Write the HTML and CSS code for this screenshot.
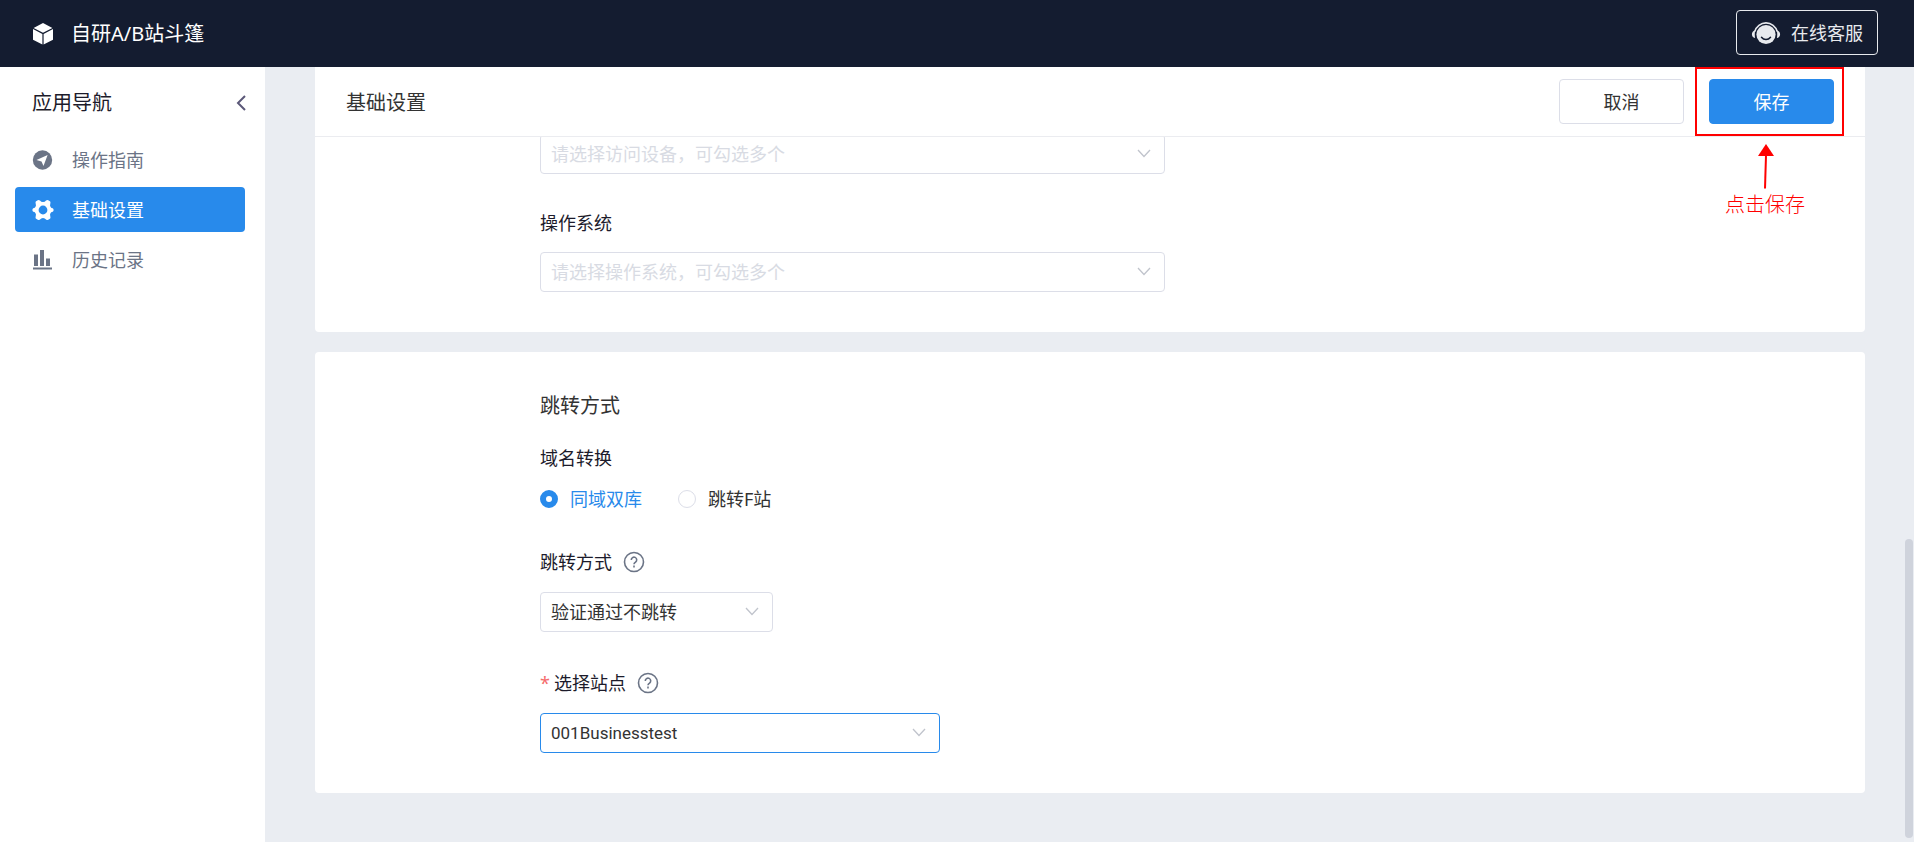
FILE: index.html
```html
<!DOCTYPE html>
<html lang="zh-CN">
<head>
<meta charset="utf-8">
<meta name="viewport" content="width=device-width, initial-scale=1">
<title>自研A/B站斗篷</title>
<link rel="stylesheet" href="styles.css">
</head>
<body>
<header class="topbar">
  <div class="brand">
    <svg class="brand-icon" width="22" height="22" viewBox="0 0 22 22" aria-hidden="true">
      <path fill="#fff" d="M11 0 20.400 4.900 11 9.800 1.600 4.900ZM1 6 10.400 10.900V21.500L1 16.800ZM21 6 11.600 10.900V21.500L21 16.800Z"/>
    </svg>
    <span>自研A/B站斗篷</span>
  </div>
  <button type="button" class="support">
    <svg width="30" height="26" viewBox="0 0 30 26" aria-hidden="true">
      <circle cx="15" cy="14.500" r="9.600" fill="#e8eaee"/>
      <path d="M3.800 11.500a11.600 11.600 0 0 1 22.400 0" fill="none" stroke="#e8eaee" stroke-width="1.600"/>
      <path d="M4.400 10.200C2 10.800.900 12.400.900 14.200s1 3.400 3.200 3.900c-.500-2.800-.500-5.400.300-7.900ZM25.600 10.200c2.400.600 3.500 2.200 3.500 4s-1 3.400-3.200 3.900c.500-2.800.500-5.400-.300-7.900Z" fill="#e8eaee"/>
      <path d="M10.500 17.300c2.300 3 6.700 3 9 0" fill="none" stroke="#141c30" stroke-width="1.500" stroke-linecap="round"/>
    </svg>
    <span>在线客服</span>
  </button>
</header>

<div class="layout">
  <aside class="sidebar">
    <div class="sidebar-head">
      <span>应用导航</span>
      <button type="button" class="collapse" aria-label="收起">
        <svg width="10" height="16" viewBox="0 0 10 16"><path d="M9 1 2 8l7 7" fill="none" stroke="#5b5878" stroke-width="2"/></svg>
      </button>
    </div>
    <nav class="nav">
      <a class="nav-item" href="#guide">
        <svg width="22" height="22" viewBox="0 0 22 22" aria-hidden="true"><circle cx="10.500" cy="11" r="9.700" fill="#6b7486"/><path d="M15.600 6 4.500 11l5 1.500L11.500 17Z" fill="#fff"/></svg>
        <span>操作指南</span>
      </a>
      <a class="nav-item active" href="#settings">
        <svg width="22" height="22" viewBox="0 0 22 22" aria-hidden="true">
          <path fill="#fff" fill-rule="evenodd" d="M5.300 1.400Q6.500.500 8 1.500Q9 3 11 3T14 1.500Q15.500.500 16.700 1.400L18.200 2.500Q18.700 3 18.300 4.700Q17.600 6.500 18.600 8T20.800 9.300Q21.600 9.800 21.600 11T20.800 12.700Q19.600 12.800 18.600 14T18.300 17.300Q18.700 19 18.200 19.500L16.700 20.600Q15.500 21.500 14 20.500Q13 19 11 19T8 20.500Q6.500 21.500 5.300 20.600L3.800 19.500Q3.300 19 3.700 17.300Q4.400 15.500 3.400 14T1.200 12.700Q.400 12.200 .400 11T1.200 9.300Q2.400 9.200 3.400 8T3.700 4.700Q3.300 3 3.800 2.500ZM11 6.600a4.400 4.400 0 1 0 0 8.800a4.400 4.400 0 1 0 0-8.800Z"/>
        </svg>
        <span>基础设置</span>
      </a>
      <a class="nav-item" href="#history">
        <svg width="22" height="22" viewBox="0 0 22 22" aria-hidden="true"><path fill="#6b7486" d="M2 5.500H6V17H2ZM8 1H12V17H8ZM14 9.500H18V17H14ZM1 18.500h19v2H1Z"/></svg>
        <span>历史记录</span>
      </a>
    </nav>
  </aside>

  <main class="main">
    <form class="form">
      <div class="page-head">
        <h1>基础设置</h1>
        <div class="actions">
          <button type="button" class="btn">取消</button>
          <div class="save-wrap">
            <button type="button" class="btn primary">保存</button>
            <div class="callout-box"></div>
            <div class="callout-note">
              <svg width="18" height="46" viewBox="0 0 18 46" aria-hidden="true"><path d="M10 0 18 12H2Z" fill="#f00"/><path d="M10 11 9 44.500" stroke="#f00" stroke-width="2"/></svg>
              <span>点击保存</span>
            </div>
          </div>
        </div>
      </div>

      <section class="card visitor">
        <div class="pick wide">
          <select class="empty" aria-label="访问设备"><option>请选择访问设备，可勾选多个</option></select>
          <svg class="chev" width="14" height="9" viewBox="0 0 14 9" aria-hidden="true"><path d="M1 1l6 6.500L13 1"/></svg>
        </div>
        <div class="field">
          <div class="label-row"><label for="os">操作系统</label></div>
          <div class="pick wide">
            <select class="empty" id="os"><option>请选择操作系统，可勾选多个</option></select>
            <svg class="chev" width="14" height="9" viewBox="0 0 14 9" aria-hidden="true"><path d="M1 1l6 6.500L13 1"/></svg>
          </div>
        </div>
      </section>

      <section class="card redirect">
        <h2>跳转方式</h2>
        <div class="domain" role="radiogroup" aria-labelledby="domain-label">
          <div class="label-row" id="domain-label">域名转换</div>
          <div class="radios">
            <label><input type="radio" name="domain" checked><span>同域双库</span></label>
            <label><input type="radio" name="domain"><span>跳转F站</span></label>
          </div>
        </div>
        <div class="field">
          <div class="label-row">
            <label for="mode">跳转方式</label>
            <svg class="help" width="22" height="22" viewBox="0 0 22 22" aria-hidden="true"><circle cx="11" cy="11" r="9.500"/><path d="M8.300 8.900a2.700 2.700 0 1 1 4.300 2.100c-1 .700-1.600 1.100-1.600 2.200"/><path d="M11 14.600v1.800"/></svg>
          </div>
          <div class="pick small">
            <select id="mode"><option>验证通过不跳转</option></select>
            <svg class="chev" width="14" height="9" viewBox="0 0 14 9" aria-hidden="true"><path d="M1 1l6 6.500L13 1"/></svg>
          </div>
        </div>
        <div class="field">
          <div class="label-row">
            <label for="site"><span class="req">*</span>选择站点</label>
            <svg class="help" width="22" height="22" viewBox="0 0 22 22" aria-hidden="true"><circle cx="11" cy="11" r="9.500"/><path d="M8.300 8.900a2.700 2.700 0 1 1 4.300 2.100c-1 .700-1.600 1.100-1.600 2.200"/><path d="M11 14.600v1.800"/></svg>
          </div>
          <div class="pick medium">
            <select class="focused" id="site"><option>001Businesstest</option></select>
            <svg class="chev" width="14" height="9" viewBox="0 0 14 9" aria-hidden="true"><path d="M1 1l6 6.500L13 1"/></svg>
          </div>
        </div>
      </section>
    </form>
    <div class="scroll-thumb"></div>
  </main>
</div>
</body>
</html>
```

FILE: styles.css
```css
* {
  box-sizing: border-box;
}

body {
  margin: 0;
  min-height: 100vh;
  display: flex;
  flex-direction: column;
  font-family: "Noto Sans", "Noto Sans CJK SC", sans-serif;
  font-size: 18px;
  line-height: 24px;
  color: #1c1b2b;
  background: #eaedf2;
}

button,
select {
  font: inherit;
}

h1,
h2 {
  margin: 0;
  font-size: 20px;
  font-weight: 400;
  color: #333;
}

.topbar {
  height: 67px;
  padding: 10px 36px 12px 32px;
  display: flex;
  align-items: center;
  justify-content: space-between;
  background: #141c30;
  color: #fff;
}

.brand {
  display: flex;
  align-items: center;
  gap: 17px;
  padding-top: 2px;
  font-size: 20px;
}

.support {
  height: 45px;
  padding: 0 14px;
  display: flex;
  align-items: center;
  gap: 10px;
  border: 1px solid #e8eaee;
  border-radius: 4px;
  background: none;
  color: #e8eaee;
}

.layout {
  flex: 1;
  display: flex;
}

.sidebar {
  width: 265px;
  flex: none;
  background: #fff;
}

.sidebar-head {
  height: 70px;
  padding: 1px 19px 0 32px;
  display: flex;
  align-items: center;
  justify-content: space-between;
  font-size: 20px;
}

.collapse {
  display: flex;
  padding: 0;
  border: 0;
  background: none;
}

.nav {
  padding: 0 20px 0 15px;
  display: flex;
  flex-direction: column;
  gap: 5px;
}

.nav-item {
  height: 45px;
  padding-left: 17px;
  display: flex;
  align-items: center;
  gap: 18px;
  border-radius: 4px;
  color: #6b7486;
  text-decoration: none;
}

.nav-item.active {
  background: #288aeb;
  color: #fff;
}

.main {
  flex: 1;
  position: relative;
  padding: 0 49px 48px 50px;
}

.page-head {
  position: relative;
  z-index: 1;
  height: 70px;
  padding: 12px 31px;
  display: flex;
  align-items: center;
  justify-content: space-between;
  border-bottom: 1px solid #ebecf0;
  background: #fff;
}

.page-head h1 {
  padding-top: 2px;
}

.actions {
  display: flex;
  gap: 25px;
}

.btn {
  width: 125px;
  height: 45px;
  border: 1px solid #dcdee8;
  border-radius: 4px;
  background: #fff;
  color: #333;
}

.btn.primary {
  border-color: #288aeb;
  background: #288aeb;
  color: #fff;
}

.save-wrap {
  position: relative;
  display: flex;
}

.callout-box {
  position: absolute;
  inset: -12px -10px;
  border: 2px solid #f00;
  border-width: 2px;
  left: -14px;
  pointer-events: none;
}

.callout-note {
  position: absolute;
  top: 65px;
  left: 16px;
  display: flex;
  flex-direction: column;
  align-items: center;
  gap: 3px;
  font-size: 20px;
  font-weight: 300;
  white-space: nowrap;
  color: #f00;
}

.card {
  padding-left: 225px;
  padding-bottom: 40px;
  background: #fff;
  border-radius: 4px;
}

.visitor {
  margin-top: -3px;
}

.redirect {
  margin-top: 20px;
  padding-top: 42px;
}

.domain {
  margin-top: 28px;
}

.field {
  margin-top: 37px;
}

.redirect .field {
  margin-top: 39px;
}

.label-row {
  display: flex;
  align-items: center;
  gap: 11px;
  margin-bottom: 17px;
}

.redirect .field .label-row {
  margin-bottom: 18px;
}

.req {
  margin-right: 4px;
  color: #f56c6c;
}

.radios {
  display: flex;
  gap: 36px;
}

.radios label {
  display: flex;
  align-items: center;
  gap: 12px;
  color: #333;
}

.radios input {
  appearance: none;
  width: 18px;
  height: 18px;
  margin: 0;
  border: 1px solid #dcdee8;
  border-radius: 50%;
  background: #fff;
}

.radios input:checked {
  border: 6px solid #288aeb;
}

.radios input:checked + span {
  color: #288aeb;
}

.help {
  fill: none;
  stroke: #6b7486;
  stroke-width: 1.6;
}

.pick {
  position: relative;
}

.wide {
  width: 625px;
}

.medium {
  width: 400px;
}

.small {
  width: 233px;
}

.pick select {
  appearance: none;
  display: block;
  width: 100%;
  height: 40px;
  padding: 0 40px 0 10px;
  border: 1px solid #dcdee8;
  border-radius: 4px;
  background: #fff;
  color: #333;
}

.pick .empty {
  color: #d8dbe3;
}

.pick .focused {
  border-color: #288aeb;
  font-family: Roboto, "Noto Sans CJK SC", sans-serif;
  font-size: 17px;
}

.chev {
  position: absolute;
  top: 15px;
  right: 14px;
  fill: none;
  stroke: #c0c4cc;
  stroke-width: 1.3;
  pointer-events: none;
}

.scroll-thumb {
  position: absolute;
  right: 1px;
  bottom: 4px;
  width: 8px;
  height: 299px;
  border-radius: 4px;
  background: #cfd3dc;
}
```
